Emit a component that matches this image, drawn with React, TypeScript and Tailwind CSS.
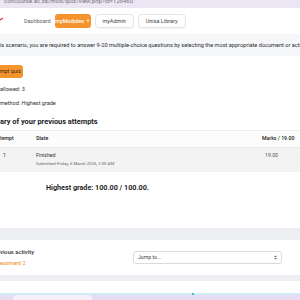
export default function App() {
  return (
    <div className="w-[300px] h-[300px] overflow-hidden bg-white font-['Roboto','Liberation_Sans',sans-serif] text-[#222]">
      {/* url strip */}
      <div className="h-[8px] bg-[#ece5f3] overflow-hidden flex items-start">
        <span className="pl-[4px] text-[6px] leading-[6px] text-[#77737f] -mt-[2px] whitespace-nowrap">
          concourse.ac.za/mod/quiz/view.php?id=128460
        </span>
      </div>

      {/* nav */}
      <div className="h-[26px] flex items-center bg-white shadow-[0_1px_2px_rgba(0,0,0,0.06)]">
        <svg width="4" height="6" viewBox="0 0 4 6" className="mr-[20px] -mt-[4px]">
          <path d="M0 4 L3 2" stroke="#d8323a" strokeWidth="1.2" />
        </svg>
        <span className="text-[5.5px] text-[#5b6066] mr-[4px]">Dashboard</span>
        <div className="w-[36px] h-[14px] rounded-[3px] bg-[#f4942c] text-white text-[5.5px] font-medium flex items-center justify-center gap-[2px] whitespace-nowrap">
          myModules <span className="text-[4px]">▼</span>
        </div>
        <div className="ml-[4px] w-[39px] h-[14px] rounded-[4px] border border-[#e3e5e8] bg-white text-[5.5px] text-[#444] flex items-center justify-center shadow-[0_1px_1px_rgba(0,0,0,0.04)]">
          myAdmin
        </div>
        <div className="ml-[4px] w-[48px] h-[14px] rounded-[4px] border border-[#e3e5e8] bg-white text-[5.5px] text-[#444] flex items-center justify-center shadow-[0_1px_1px_rgba(0,0,0,0.04)]">
          Unisa Library
        </div>
      </div>

      {/* intro strip */}
      <div className="h-[22px] bg-[#f6f7f9] flex items-center pt-[1px] whitespace-nowrap overflow-hidden">
        <span className="text-[5.6px] text-[#2a2e33]">
          is scenario, you are required to answer 9-20 multiple-choice questions by selecting the most appropriate document or action
        </span>
      </div>

      {/* quiz info */}
      <div className="pt-[9px]">
        <div className="w-[23px] h-[13px] rounded-r-[3px] bg-[#f4942c] text-[5.5px] text-[#3a2a12] flex items-center justify-end pr-[2px] whitespace-nowrap overflow-hidden">
          mpt quiz
        </div>
        <div className="mt-[7px] text-[5.5px] text-[#2a2e33] leading-[8px]">allowed: 3</div>
        <div className="mt-[6px] text-[5.5px] text-[#2a2e33] leading-[8px]">method: Highest grade</div>
        <div className="mt-[10px] text-[7.4px] font-bold leading-[10px]">ary of your previous attempts</div>

        {/* table */}
        <div className="mt-[3px] text-[5.2px]">
          <div className="h-[18px] flex items-center border-t border-b border-[#ececec] bg-[#fcfcfc] font-medium text-[#222]">
            <span className="w-[36px]">tempt</span>
            <span className="flex-1">State</span>
            <span className="w-[38px]">Marks / 19.00</span>
          </div>
          <div className="h-[24px] flex bg-[#f3f3f3] pt-[4px] text-[#333]">
            <span className="w-[36px] pl-[3px]">1</span>
            <div className="flex-1 flex flex-col">
              <span>Finished</span>
              <span className="text-[4.3px] text-[#666] mt-[1px]">Submitted Friday, 6 March 2026, 2:00 AM</span>
            </div>
            <span className="w-[35px] text-[#555]">19.00</span>
          </div>
        </div>

        <div className="mt-[11px] pl-[46px] text-[7.2px] font-bold leading-[10px] text-[#1f1f1f]">Highest grade: 100.00 / 100.00.</div>
      </div>

      <div className="mt-[35px] h-[12px] bg-[#eeeff3]" />

      {/* activity nav */}
      <div className="h-[35px] flex items-center">
        <div className="flex-1 flex flex-col gap-[2px]">
          <span className="text-[5.8px] font-medium text-[#333]">vious activity</span>
          <span className="text-[5.5px] text-[#f08a24]">essment 2</span>
        </div>
        <div className="mr-[18px] w-[149px] h-[13px] rounded-[3px] border border-[#d9dbdf] bg-white flex items-center justify-between px-[4px] text-[5.2px] text-[#444]">
          <span>Jump to...</span>
          <svg width="3" height="5" viewBox="0 0 3 5">
            <path d="M0 2 L1.5 0.5 L3 2 Z M0 3 L1.5 4.5 L3 3 Z" fill="#666" />
          </svg>
        </div>
      </div>

      <div className="h-[6px] bg-[#eeeff3]" />
      <div className="h-[12px] bg-white" />
      <div className="h-[2px] bg-[#cdeef4] relative">
        <div className="absolute left-[192px] top-0 w-[2px] h-[2px] bg-[#56b6d6]" />
      </div>
      <div className="h-[5px] bg-[#e7dcf3] flex">
        <div className="ml-[13px] w-[79px] h-full rounded-t-[4px] bg-[#f7f0fb]" />
      </div>
    </div>
  );
}
